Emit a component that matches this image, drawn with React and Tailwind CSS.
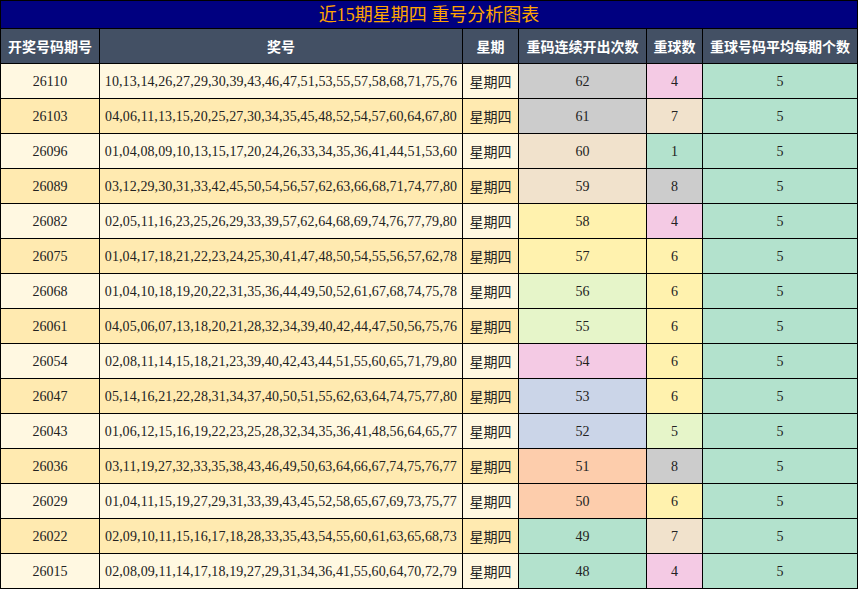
const G="bg-[#cccccc]",P="bg-[#f4cae4]",B="bg-[#f1e2cc]",M="bg-[#b3e2cd]",Y="bg-[#fff2ae]",L="bg-[#e6f5c9]",U="bg-[#cbd5e8]",O="bg-[#fdcdac]";
const rows=[
["26110","10,13,14,26,27,29,30,39,43,46,47,51,53,55,57,58,68,71,75,76",62,G,4,P],
["26103","04,06,11,13,15,20,25,27,30,34,35,45,48,52,54,57,60,64,67,80",61,G,7,B],
["26096","01,04,08,09,10,13,15,17,20,24,26,33,34,35,36,41,44,51,53,60",60,B,1,M],
["26089","03,12,29,30,31,33,42,45,50,54,56,57,62,63,66,68,71,74,77,80",59,B,8,G],
["26082","02,05,11,16,23,25,26,29,33,39,57,62,64,68,69,74,76,77,79,80",58,Y,4,P],
["26075","01,04,17,18,21,22,23,24,25,30,41,47,48,50,54,55,56,57,62,78",57,Y,6,Y],
["26068","01,04,10,18,19,20,22,31,35,36,44,49,50,52,61,67,68,74,75,78",56,L,6,Y],
["26061","04,05,06,07,13,18,20,21,28,32,34,39,40,42,44,47,50,56,75,76",55,L,6,Y],
["26054","02,08,11,14,15,18,21,23,39,40,42,43,44,51,55,60,65,71,79,80",54,P,6,Y],
["26047","05,14,16,21,22,28,31,34,37,40,50,51,55,62,63,64,74,75,77,80",53,U,6,Y],
["26043","01,06,12,15,16,19,22,23,25,28,32,34,35,36,41,48,56,64,65,77",52,U,5,L],
["26036","03,11,19,27,32,33,35,38,43,46,49,50,63,64,66,67,74,75,76,77",51,O,8,G],
["26029","01,04,11,15,19,27,29,31,33,39,43,45,52,58,65,67,69,73,75,77",50,O,6,Y],
["26022","02,09,10,11,15,16,17,18,28,33,35,43,54,55,60,61,63,65,68,73",49,M,7,B],
["26015","02,08,09,11,14,17,18,19,27,29,31,34,36,41,55,60,64,70,72,79",48,M,4,P],
];
const td="border border-black text-center p-0";
export default function App(){
return <div className="w-[858px] h-[589px] bg-white">
<table className="w-[858px] border-collapse border border-black text-[14px] text-[#222]" style={{fontFamily:'"Liberation Serif","Noto Sans CJK SC",serif'}}>
<colgroup><col className="w-[99px]"/><col className="w-[363px]"/><col className="w-[56px]"/><col className="w-[128px]"/><col className="w-[56px]"/><col/></colgroup>
<thead>
<tr className="h-[28px] bg-[#000080]"><th colSpan={6} className="border border-black text-[#ffa500] font-normal text-[18px] leading-none" style={{fontFamily:'"Liberation Serif","Noto Sans CJK SC",serif'}}>近15期星期四 重号分析图表</th></tr>
<tr className="h-[35px] bg-[#435064] text-white text-[14px] font-bold" style={{fontFamily:'"Noto Sans CJK SC",sans-serif'}}>
{["开奖号码期号","奖号","星期","重码连续开出次数","重球数","重球号码平均每期个数"].map(h=><th key={h} className={td+" font-bold"}>{h}</th>)}
</tr></thead>
<tbody>{rows.map((r,i)=><tr key={r[0]} className={"h-[35px] "+(i%2?"bg-[#ffeab0]":"bg-[#fff8e1]")}>
<td className={td}>{r[0]}</td><td className={td+" tracking-[0.1px]"}>{r[1]}</td>
<td className={td} style={{fontFamily:'"Noto Sans CJK SC",sans-serif'}}>星期四</td>
<td className={td+" "+r[3]}>{r[2]}</td><td className={td+" "+r[5]}>{r[4]}</td><td className={td+" "+M}>5</td>
</tr>)}</tbody></table></div>;
}
